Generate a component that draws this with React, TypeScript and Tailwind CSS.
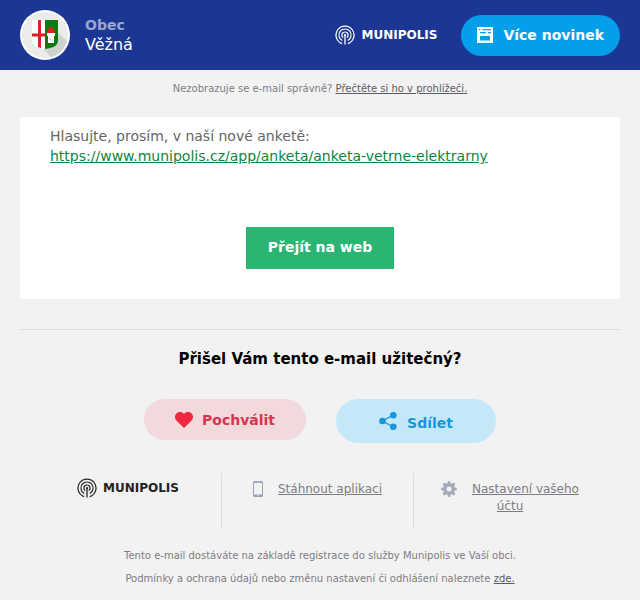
import type { ReactNode } from "react"
import { clsx } from "clsx"

function Crest() {
  return (
    <svg viewBox="0 0 50 50" className="size-[50px] shrink-0" role="img" aria-label="Znak obce">
      <circle cx="25" cy="25" r="25" fill="#fff" />
      <circle cx="25" cy="25" r="23" fill="#ebebeb" />
      <path d="M38 23 L47 31 A23 23 0 0 1 31 47.2 L23 38.5 Z" fill="#cfd3cf" />
      <path d="M12 10h13v29C17 38 12 36 12 30Z" fill="#fff" />
      <path d="M25 10h13v20c0 6-5 8-13 9Z" fill="#0a7a12" />
      <path d="M18 10h3v28l-3-1ZM12 23.5h13v3H12Z" fill="#d9202b" />
      <path d="M27.5 23v-3l3.5-3.500 3.500 3.500v3Z" fill="#e2231a" />
      <path d="M27 23h8v3h-1v7h-6v-7h-1Z" fill="#fff" />
      <path d="M30 27v3h3" fill="none" stroke="#bbb" strokeWidth="0.8" />
    </svg>
  )
}

function Munipolis({ className }: { className?: string }) {
  return (
    <a href="#munipolis" className={clsx("flex items-center gap-[6px]", className)}>
      <svg viewBox="0 0 20 20" className="size-5 shrink-0" fill="none" stroke="currentColor" strokeWidth="1.2" aria-hidden="true">
        <path d="M7.2 18.6A9 9 0 1 1 12.8 18.6" />
        <path d="M7.2 15.5A6.1 6.1 0 1 1 12.8 15.5" />
        <path d="M8.2 12.6A3.1 3.1 0 1 1 11.8 12.6" />
        <circle cx="10" cy="10" r="1.1" fill="currentColor" stroke="none" />
        <path d="M10 10v9.5" strokeWidth="1.3" />
      </svg>
      <span className="text-xs leading-5 font-bold">MUNIPOLIS</span>
    </a>
  )
}

function NewsIcon() {
  return (
    <svg viewBox="0 0 16 16" className="size-4 shrink-0" aria-hidden="true">
      <path
        fill="currentColor"
        fillRule="evenodd"
        d="M0 0h16v16H0ZM2 2v1.2h1.5V2ZM5.500 2v1.200H14V2ZM3 5v1.200h6V5ZM11 5v1.200h3V5ZM3 9v4.500h10V9Z"
      />
    </svg>
  )
}

function HeartIcon() {
  return (
    <svg viewBox="0 0 18 16" className="h-4 w-[18px] shrink-0" fill="#f0283f" aria-hidden="true">
      <path d="M9 16 1.6 8.8C-.5 6.6-.5 3.4 1.4 1.5 3.5-.5 6.9-.5 9 2c2.1-2.5 5.5-2.5 7.6-.5 1.9 1.9 1.9 5.1-.2 7.3Z" />
    </svg>
  )
}

function ShareIcon() {
  return (
    <svg viewBox="0 0 18 18" className="size-[18px] shrink-0" fill="currentColor" aria-hidden="true">
      <path d="M14.3 3 3.5 9l10.8 6" fill="none" stroke="currentColor" strokeWidth="1.3" />
      <circle cx="3.5" cy="9" r="3.3" />
      <circle cx="14.3" cy="3.3" r="3.3" />
      <circle cx="14.3" cy="14.7" r="3.3" />
    </svg>
  )
}

function PhoneIcon() {
  return (
    <svg viewBox="0 0 10 16" className="h-4 w-[10px] shrink-0" aria-hidden="true">
      <path
        fill="#9aa3b4"
        fillRule="evenodd"
        d="M1.5 0h7A1.5 1.5 0 0 1 10 1.5v13A1.5 1.5 0 0 1 8.5 16h-7A1.5 1.5 0 0 1 0 14.5v-13A1.5 1.5 0 0 1 1.5 0ZM1 2v11.5h8V2ZM3.5 .7v.5h3V.7ZM4.3 14.3v.8h1.4v-.8Z"
      />
    </svg>
  )
}

function GearIcon() {
  return (
    <svg viewBox="0 0 16 16" className="inline-block size-4" aria-hidden="true">
      <g fill="none" stroke="#a3aabb" strokeWidth="3" strokeLinecap="round">
        <path d="M8 1.5v13M1.5 8h13M3.4 3.4l9.2 9.2M12.6 3.4l-9.2 9.2" />
      </g>
      <circle cx="8" cy="8" r="5.9" fill="#a3aabb" />
      <circle cx="8" cy="8" r="2.5" fill="#f2f2f2" />
    </svg>
  )
}

function FooterCell({ children, last }: { children: ReactNode; last?: boolean }) {
  return (
    <div className={clsx("flex h-14 items-start justify-center gap-[15px] pt-2 text-xs", !last && "border-r border-[#dcdcdc]")}>
      {children}
    </div>
  )
}

export default function App() {
  return (
    <div className="min-h-screen bg-[#f2f2f2] font-['DejaVu_Sans',sans-serif] text-[#7d7d85]">
      <header className="flex items-center bg-[#1b3793] px-5 py-[10px] text-white">
        <Crest />
        <div className="ml-[15px] flex-1">
          <div className="text-sm leading-[19px] font-bold text-[#9aa6d2]">Obec</div>
          <div className="text-base leading-5">Věžná</div>
        </div>
        <Munipolis className="mr-6" />
        <a
          href="#novinky"
          className="flex h-[41px] items-center gap-[10px] rounded-full bg-[#059ee8] px-4 text-sm font-bold"
        >
          <NewsIcon />
          Více novinek
        </a>
      </header>

      <p className="pt-[11px] text-center text-[10px] leading-4">
        Nezobrazuje se e-mail správně?{" "}
        <a href="#prohlizec" className="text-[#5c5c62] underline">Přečtěte si ho v prohlížeči.</a>
      </p>

      <div className="px-5">
        <main className="mt-5 bg-white px-[30px] pt-[9px] pb-[30px]">
          <p className="text-sm leading-5 text-[#666]">
            Hlasujte, prosím, v naší nové anketě:
            <br />
            <a href="https://www.munipolis.cz/app/anketa/anketa-vetrne-elektrarny" className="text-[#0f8442] underline">
              https://www.munipolis.cz/app/anketa/anketa-vetrne-elektrarny
            </a>
          </p>
          <div className="mt-[61px] flex justify-center">
            <a href="#web" className="bg-[#2ab573] px-[22px] pt-[10px] pb-3 text-sm leading-5 font-bold text-white">
              Přejít na web
            </a>
          </div>
        </main>

        <section className="mt-[30px] border-t border-[#dcdcdc] pt-[19px]">
          <h2 className="text-center text-[15px] leading-5 font-bold text-black">Přišel Vám tento e-mail užitečný?</h2>
          <div className="mt-[30px] flex items-start justify-center gap-[30px] text-sm font-bold">
            <button type="button" className="flex h-[41px] items-center gap-[9px] rounded-full bg-[#f1d9dc] px-[31px] text-[#d9344f]">
              <HeartIcon />
              Pochválit
            </button>
            <button type="button" className="flex h-11 items-center gap-[10px] rounded-full bg-[#c5e8f9] px-[43px] text-[#1597de]">
              <ShareIcon />
              <span className="pt-1">Sdílet</span>
            </button>
          </div>
        </section>
      </div>

      <footer className="mt-[30px]">
        <div className="grid grid-cols-3 pr-[34px] pl-[30px]">
          <FooterCell>
            <Munipolis className="-mt-[3px] pl-[5px] text-[#222]" />
          </FooterCell>
          <FooterCell>
            <PhoneIcon />
            <a href="#aplikace" className="leading-[17px] underline">Stáhnout aplikaci</a>
          </FooterCell>
          <FooterCell last>
            <a href="#ucet" className="w-[150px] text-center leading-[17px]">
              <span className="mr-[15px] inline-flex align-top">
                <GearIcon />
              </span>
              <span className="underline">Nastavení vašeho účtu</span>
            </a>
          </FooterCell>
        </div>
        <div className="mt-[15px] text-center text-[10px] leading-[23px]">
          <p>Tento e-mail dostáváte na základě registrace do služby Munipolis ve Vaší obci.</p>
          <p>
            Podmínky a ochrana údajů nebo změnu nastavení či odhlášení naleznete{" "}
            <a href="#zde" className="text-[#5c5c62] underline">zde.</a>
          </p>
        </div>
      </footer>
    </div>
  )
}
